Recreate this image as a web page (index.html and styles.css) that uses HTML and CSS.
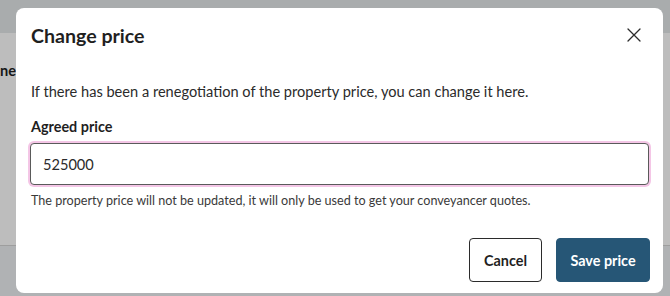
FILE: index.html
```html
<!DOCTYPE html>
<html lang="en">
<head>
<meta charset="utf-8">
<title>Change price</title>
<link rel="stylesheet" href="styles.css">
</head>
<body>
<div class="page">
  <div class="page-top"></div>
  <div class="page-card">
    <div class="card-heading"><span>Timeline</span></div>
  </div>
  <div class="page-bottom"></div>
</div>
<div class="overlay"></div>
<div class="dialog" role="dialog" aria-labelledby="dlg-title">
  <div class="dialog-header">
    <h2 class="dialog-title" id="dlg-title">Change price</h2>
    <button class="close-btn" aria-label="Close">
      <svg width="14" height="14" viewBox="0 0 14 14" aria-hidden="true">
        <path d="M1 1 L13 13 M13 1 L1 13" stroke="#2b2b2b" stroke-width="1.3" fill="none" stroke-linecap="round"/>
      </svg>
    </button>
  </div>
  <div class="dialog-body">
    <p class="intro">If there has been a renegotiation of the property price, you can change it here.</p>
    <label class="field-label" for="price">Agreed price</label>
    <div class="input-wrap">
      <input class="price-input" id="price" type="text" value="525000">
    </div>
    <p class="hint">The property price will not be updated, it will only be used to get your conveyancer quotes.</p>
  </div>
  <div class="dialog-footer">
    <button class="btn btn-secondary">Cancel</button>
    <button class="btn btn-primary">Save price</button>
  </div>
</div>
</body>
</html>
```
FILE: styles.css
```css
* { box-sizing: border-box; }
html, body { margin: 0; padding: 0; }
body {
  width: 670px;
  height: 296px;
  overflow: hidden;
  font-family: Lato, "Noto Sans", sans-serif;
  background: #eef1f3;
  position: relative;
}
.page {
  display: flex;
  flex-direction: column;
  height: 296px;
}
.page-top { height: 33px; background: #e4e8ea; }
.page-card {
  height: 213px;
  background: #ffffff;
  border-bottom: 1px solid #d6d6d6;
  padding: 28px 0 0 0;
}
.card-heading {
  width: 16px;
  display: flex;
  justify-content: flex-end;
  font-weight: 700;
  font-size: 14.6px;
  color: #1f1f1f;
  white-space: nowrap;
  line-height: 20px;
}
.card-heading span { flex: none; }
.page-bottom { flex: 1; background: #eef1f3; }
.overlay {
  position: absolute;
  inset: 0;
  background: rgba(0, 0, 0, 0.26);
}
.dialog {
  position: absolute;
  left: 16px;
  top: 8px;
  width: 647px;
  height: 285px;
  background: #ffffff;
  border-radius: 8px;
  display: flex;
  flex-direction: column;
  padding: 16px 14px 11px 14px;
  color: #2b2b2b;
}
.dialog-header {
  display: flex;
  align-items: center;
  justify-content: space-between;
  height: 24px;
}
.dialog-title {
  margin: 0 0 0 1px;
  font-size: 19.6px;
  line-height: 24px;
  font-weight: 700;
  color: #1f1f1f;
}
.close-btn {
  border: 0;
  background: none;
  padding: 0;
  width: 14px;
  height: 14px;
  margin-right: 8px;
  margin-top: -2px;
  display: flex;
  cursor: pointer;
}
.dialog-body {
  display: flex;
  flex-direction: column;
  padding-top: 34px;
}
.intro {
  margin: 0 0 0 1px;
  font-size: 14.6px;
  line-height: 20px;
  color: #2b2b2b;
}
.field-label {
  margin: 15px 0 0 1px;
  font-size: 14.4px;
  line-height: 20px;
  font-weight: 700;
  color: #1f1f1f;
}
.input-wrap {
  margin-top: 6px;
  height: 42px;
  display: flex;
  align-items: center;
  padding: 0 12px 0 12px;
  border: 1px solid #5a5a5a;
  border-radius: 4px;
  background: #fff;
  box-shadow: 0 0 0 2px #f4c6e6;
}
.price-input {
  display: block;
  flex: 1;
  min-width: 0;
  height: 22px;
  margin: 0;
  border: 0;
  padding: 0;
  font-family: Lato, "Noto Sans", sans-serif;
  font-size: 14.6px;
  color: #2b2b2b;
  outline: none;
  background: transparent;
}
.hint {
  margin: 8px 0 0 1px;
  font-size: 12.6px;
  line-height: 16px;
  color: #3a3a3a;
}
.dialog-footer {
  margin-top: auto;
  display: flex;
  justify-content: flex-end;
  gap: 14px;
}
.btn {
  height: 44px;
  border-radius: 4px;
  font-family: Lato, "Noto Sans", sans-serif;
  font-size: 14.4px;
  font-weight: 700;
  cursor: pointer;
}
.btn-secondary {
  width: 73px;
  background: #fff;
  border: 1px solid #2b2b2b;
  color: #1f1f1f;
}
.btn-primary {
  width: 94px;
  margin-right: -1px;
  background: #265676;
  border: 1px solid #265676;
  color: #fff;
}
```
